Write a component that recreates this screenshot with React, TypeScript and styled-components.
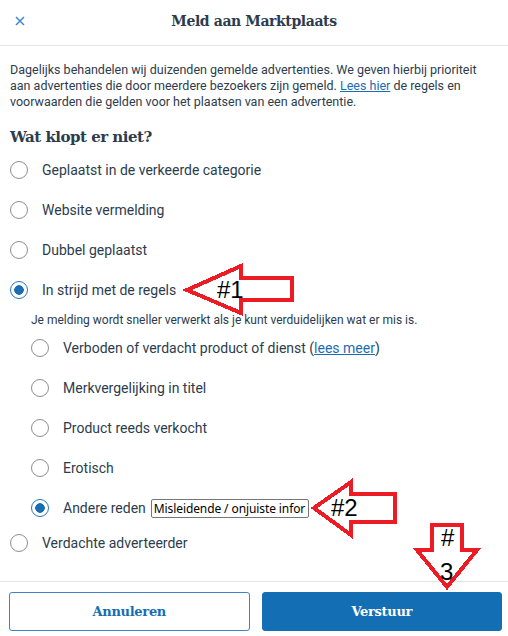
import React from "react";
import styled, {createGlobalStyle} from "styled-components";

const BLUE = "#1a6db3";
const TEXT = "#2d3c4d";
const SLAB = `"DejaVu Serif", serif`;

const GlobalStyle = createGlobalStyle`
  html, body {
    margin: 0;
    padding: 0;
    background: #fff;
  }
  body {
    font-family: Roboto, "Liberation Sans", sans-serif;
    color: ${TEXT};
  }
`

type Option = {label: React.ReactNode; checked?: boolean; extra?: React.ReactNode};

const mainOptions: Option[] = [
  {label: "Geplaatst in de verkeerde categorie"},
  {label: "Website vermelding"},
  {label: "Dubbel geplaatst"},
  {label: "In strijd met de regels", checked: true},
];

const App = () => {
  const subOptions: Option[] = [
    {label: <>Verboden of verdacht product of dienst (<Link href="#">lees meer</Link>)</>},
    {label: "Merkvergelijking in titel"},
    {label: "Product reeds verkocht"},
    {label: "Erotisch"},
    {label: "Andere reden", checked: true, extra: <ReasonInput defaultValue={'Misleidende / onjuiste informatie'}/>},
  ];

  return (
    <>
      <GlobalStyle/>
      <Page>
        <Header>
          <CloseButton aria-label={'Sluiten'}>
            <svg width="10" height="10" viewBox="0 0 10 10">
              <path d="M1 1 L9 9 M9 1 L1 9" stroke="#3f86cc" strokeWidth="1.5" fill="none"/>
            </svg>
          </CloseButton>
          <Title>Meld aan Marktplaats</Title>
        </Header>

        <Content>
          <Intro>
            Dagelijks behandelen wij duizenden gemelde advertenties. We geven hierbij prioriteit
            aan advertenties die door meerdere bezoekers zijn gemeld. <Link href="#">Lees hier</Link> de regels en
            voorwaarden die gelden voor het plaatsen van een advertentie.
          </Intro>
          <Heading>Wat klopt er niet?</Heading>

          {mainOptions.map((o, i) => (
            <RadioRow key={i}>
              <Circle $checked={!!o.checked}/>
              <span>{o.label}</span>
            </RadioRow>
          ))}

          <SubGroup>
            <Note>Je melding wordt sneller verwerkt als je kunt verduidelijken wat er mis is.</Note>
            {subOptions.map((o, i) => (
              <RadioRow key={i}>
                <Circle $checked={!!o.checked}/>
                <span>{o.label}</span>
                {o.extra}
              </RadioRow>
            ))}
          </SubGroup>

          <RadioRow $compact>
            <Circle $checked={false}/>
            <span>Verdachte adverteerder</span>
          </RadioRow>
        </Content>

        <Footer>
          <Button $variant={'secondary'}>Annuleren</Button>
          <Button $variant={'primary'}>Verstuur</Button>
        </Footer>

        <Annotations width="508" height="636" viewBox="0 0 508 636">
          <g fill="#fff" stroke="#ed1c24" strokeWidth="4" strokeLinejoin="miter" shapeRendering="crispEdges">
            <polygon points="187,290 241,266 241,278 292,278 292,300 241,300 241,313"/>
            <polygon points="314,508 351,482 351,494 395,494 395,522 351,522 351,535"/>
            <polygon points="432,525 462,525 462,550 477,550 447,587 417,550 432,550"/>
          </g>
          <g fill="#000" fontFamily="'Liberation Sans', Arial, sans-serif" fontSize="24">
            <text x="217" y="298">#1</text>
            <text x="331" y="516">#2</text>
            <text x="441" y="546">#</text>
            <text x="440" y="580">3</text>
          </g>
        </Annotations>
      </Page>
    </>
  )
}

const Page = styled.div`
  position: relative;
  width: 508px;
  height: 636px;
  display: flex;
  flex-direction: column;
  overflow: hidden;
  background: #fff;
`
const Header = styled.header`
  position: relative;
  height: 45px;
  flex-shrink: 0;
  display: flex;
  align-items: center;
  justify-content: center;
  border-bottom: 1px solid #e4e4e4;
`
const CloseButton = styled.button`
  position: absolute;
  left: 10px;
  top: 11px;
  width: 20px;
  height: 20px;
  padding: 0;
  border: none;
  background: none;
  display: flex;
  align-items: center;
  justify-content: center;
`
const Title = styled.h1`
  margin: 0 0 3px;
  font-family: ${SLAB};
  font-weight: bold;
  font-size: 14px;
  letter-spacing: -0.4px;
  color: ${TEXT};
`
const Content = styled.main`
  flex: 1;
  overflow: hidden;
  padding: 16px 10px 0;
`
const Intro = styled.p`
  margin: 0;
  font-size: 12.5px;
  line-height: 16px;
`
const Link = styled.a`
  color: ${BLUE};
  text-decoration: underline;
`
const Heading = styled.h2`
  margin: 15px 0 1px;
  font-family: ${SLAB};
  font-weight: bold;
  font-size: 15px;
  letter-spacing: -0.5px;
  line-height: 24px;
  color: ${TEXT};
`
const RadioRow = styled.label<{$compact?: boolean}>`
  display: flex;
  align-items: center;
  height: ${({$compact}) => $compact ? '30px' : '40px'};
  font-size: 14px;
  color: ${TEXT};

  span {
    margin-left: 14px;
  }
`
const Circle = styled.span<{$checked: boolean}>`
  box-sizing: border-box;
  flex-shrink: 0;
  width: 18px;
  height: 18px;
  border-radius: 50%;
  border: 1.5px solid ${({$checked}) => $checked ? '#2a78c2' : '#8e8e8e'};
  background: ${({$checked}) => $checked
    ? `radial-gradient(circle, ${BLUE} 0 4.5px, #fff 5px)`
    : '#fff'};

  && {
    margin-left: 0;
  }
`
const SubGroup = styled.div`
  padding-left: 21px;
`
const Note = styled.p`
  margin: 2px 0 0;
  font-size: 12px;
  line-height: 16px;
`
const ReasonInput = styled.input`
  box-sizing: border-box;
  margin-left: 5px;
  width: 158px;
  height: 19px;
  padding: 0 2px;
  border: 1px solid #767676;
  border-radius: 2px;
  font-family: "Noto Sans", "Open Sans", sans-serif;
  font-size: 12px;
  letter-spacing: -0.1px;
  color: #000;
`
const Footer = styled.footer`
  flex-shrink: 0;
  display: grid;
  grid-template-columns: 1fr 1fr;
  gap: 12px;
  padding: 10px 6px 5px 9px;
  border-top: 1px solid #e4e4e4;
`
const Button = styled.button<{$variant: 'primary' | 'secondary'}>`
  height: 39px;
  border-radius: 3px;
  font-family: ${SLAB};
  font-weight: bold;
  font-size: 13px;
  letter-spacing: -0.3px;
  border: 1px solid ${({$variant}) => $variant === 'primary' ? '#146eb4' : '#3d84c6'};
  background: ${({$variant}) => $variant === 'primary' ? '#146eb4' : '#fff'};
  color: ${({$variant}) => $variant === 'primary' ? '#fff' : '#146eb4'};
`
const Annotations = styled.svg`
  position: absolute;
  left: 0;
  top: 0;
  pointer-events: none;
`

export default App;
